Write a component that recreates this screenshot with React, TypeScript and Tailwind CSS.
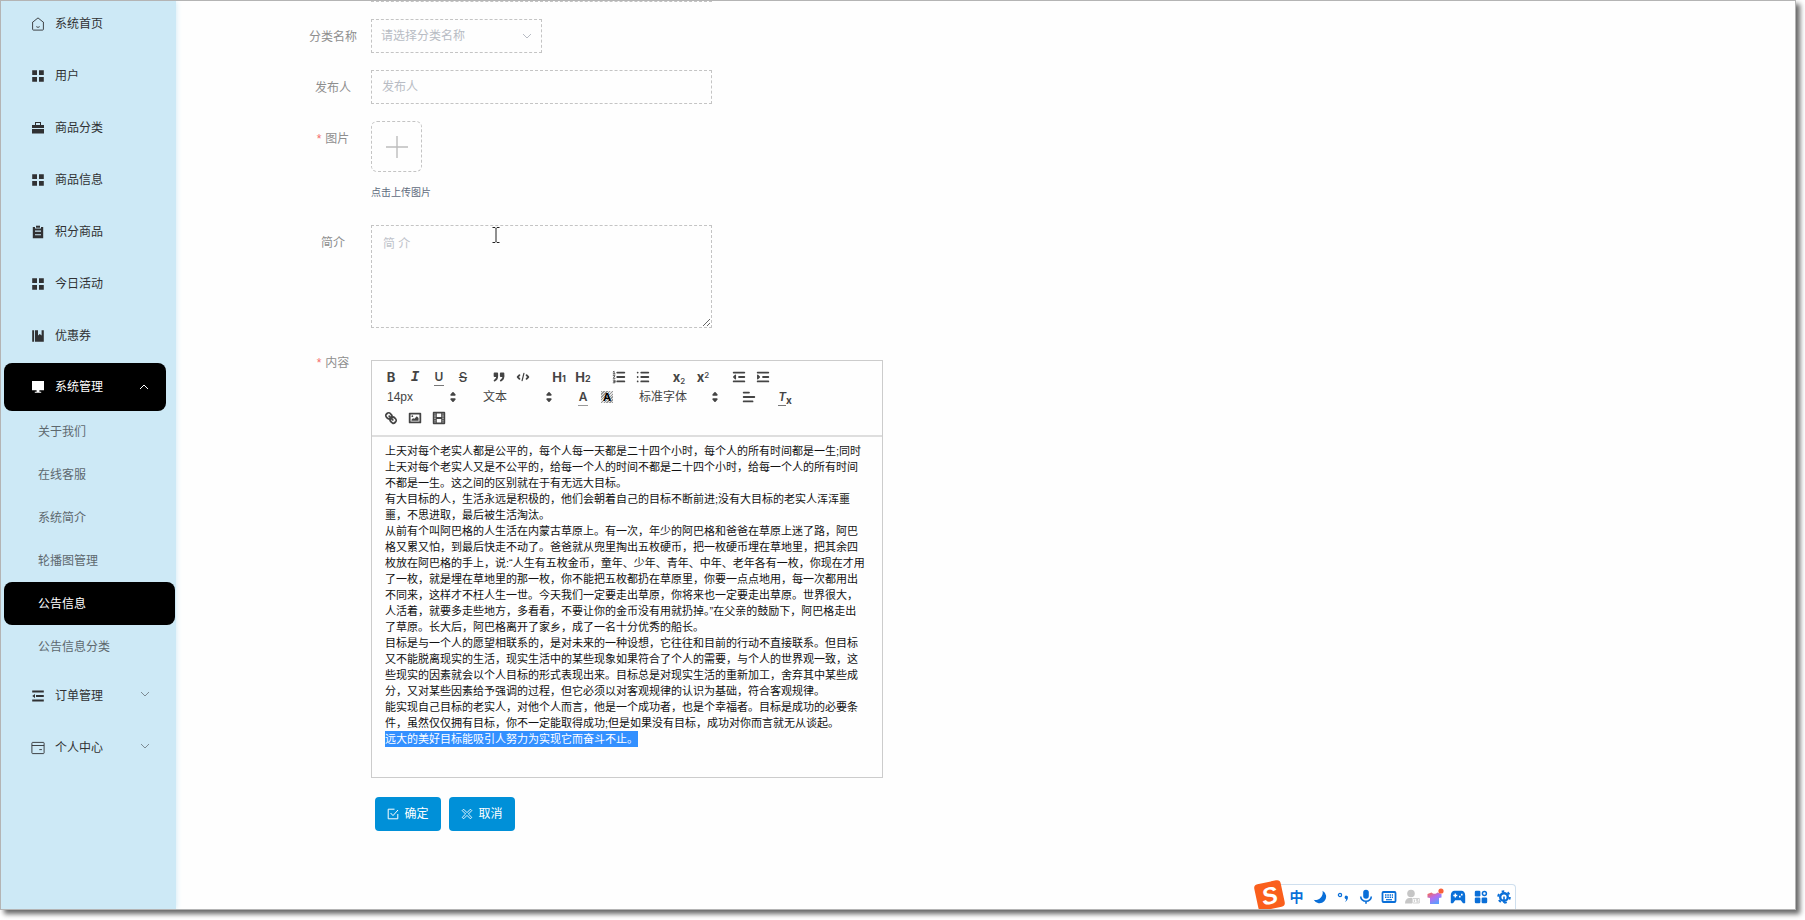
import React from 'react';

const cjk = "font-['Liberation_Sans','Noto_Sans_CJK_SC',sans-serif]";

type IconProps = { className?: string };

/* ---------- sidebar icons ---------- */

const HomeIcon = ({ className }: IconProps) => (
  <svg className={className} viewBox="0 0 14 14" fill="none" stroke="currentColor" strokeWidth="0.9">
    <path d="M1.2 5.6 7 .9l5.8 4.7M1.6 5.3v7c0 .5.3.8.8.8h9.2c.5 0 .8-.3.8-.8v-7M5.3 9.6c.9.9 2.5.9 3.4 0" />
  </svg>
);

const GridIcon = ({ className }: IconProps) => (
  <svg className={className} viewBox="0 0 14 14" fill="currentColor">
    <path d="M1.2 1.2h4.8V6H1.2zM8 1.2h4.8V6H8zM1.2 8h4.8v4.8H1.2zM8 8h4.8v4.8H8z" />
  </svg>
);

const BriefcaseIcon = ({ className }: IconProps) => (
  <svg className={className} viewBox="0 0 14 14" fill="currentColor">
    <path d="M4 1h6v3h3v3H1V4h3zM5 2v2h4V2zM1 8h12v4.6H1z" fillRule="evenodd" />
  </svg>
);

const ClipboardIcon = ({ className }: IconProps) => (
  <svg className={className} viewBox="0 0 14 14" fill="currentColor">
    <path d="M1.8 2H4v1.6h6V2h2.2v11.2H1.8zM4 5.6v1.1h6V5.6zm0 3.6v1.1h6V9.2z" fillRule="evenodd" />
    <path d="M5 .7h4v2H5z" />
  </svg>
);

const NotebookIcon = ({ className }: IconProps) => (
  <svg className={className} viewBox="0 0 14 14" fill="currentColor">
    <path d="M1.2 1.2h1.9v11.6H1.2zM4 1.2h3v5.2l1.8-1.4 1.8 1.4V1.2h2.2v11.6H4z" />
  </svg>
);

const MonitorIcon = ({ className }: IconProps) => (
  <svg className={className} viewBox="0 0 14 14" fill="currentColor">
    <path d="M1 1h12v9.3H1zM5.6 10.3h2.8v1.5h1.8v.9H3.8v-.9h1.8z" />
  </svg>
);

const ListIcon = ({ className }: IconProps) => (
  <svg className={className} viewBox="0 0 14 14" fill="currentColor">
    <path d="M1.2 1.4h11.6v2H1.2zM5 6h7.8v2H5zM1.2 10.6h11.6v2H1.2zM4 5v4L1.2 7z" />
  </svg>
);

const WalletIcon = ({ className }: IconProps) => (
  <svg className={className} viewBox="0 0 14 14" fill="none" stroke="currentColor" strokeWidth="0.9">
    <path d="M1.6 1.4h10.8c.4 0 .7.3.7.7v9.8c0 .4-.3.7-.7.7H1.6c-.4 0-.7-.3-.7-.7V2.1c0-.4.3-.7.7-.7zM.9 4.5h12.2M8.3 8.6h2.6" />
  </svg>
);

const Chevron = ({ className }: IconProps) => (
  <svg className={className} viewBox="0 0 10 10" fill="none" stroke="currentColor" strokeWidth="1">
    <path d="M1 3l4 4 4-4" />
  </svg>
);

const topMenu = [
  { label: '系统首页', Icon: HomeIcon },
  { label: '用户', Icon: GridIcon },
  { label: '商品分类', Icon: BriefcaseIcon },
  { label: '商品信息', Icon: GridIcon },
  { label: '积分商品', Icon: ClipboardIcon },
  { label: '今日活动', Icon: GridIcon },
  { label: '优惠券', Icon: NotebookIcon },
];

const subMenu = ['关于我们', '在线客服', '系统简介', '轮播图管理', '公告信息', '公告信息分类'];

const bottomMenu = [
  { label: '订单管理', Icon: ListIcon },
  { label: '个人中心', Icon: WalletIcon },
];

function Sidebar() {
  return (
    <aside className="w-[175px] shrink-0 bg-[#cde9f6] shadow-[0_0_6px_#cde9f6]">
      <nav className="-mt-[3px] text-xs text-[#303133]">
        <ul>
          {topMenu.map(({ label, Icon }) => (
            <li key={label}>
              <a href="#" className="flex h-[52px] items-center gap-2.5 pl-[30px]">
                <Icon className="size-3.5" />
                {label}
              </a>
            </li>
          ))}
          <li className="pt-px pb-0.5">
            <button
              type="button"
              className="ml-[3px] flex h-12 w-[162px] items-center gap-2.5 rounded-lg bg-black pl-[27px] text-white"
            >
              <MonitorIcon className="size-3.5" />
              系统管理
              <Chevron className="mr-[17px] ml-auto size-2.5 rotate-180" />
            </button>
            <ul className="-mt-px text-[#5d686e]">
              {subMenu.map((label) => (
                <li key={label}>
                  <a
                    href="#"
                    className={
                      label === '公告信息'
                        ? 'mr-px ml-[3px] flex h-[43px] items-center rounded-lg bg-black pl-[34px] text-white'
                        : 'mr-px ml-[3px] flex h-[43px] items-center pl-[34px]'
                    }
                  >
                    {label}
                  </a>
                </li>
              ))}
            </ul>
          </li>
          {bottomMenu.map(({ label, Icon }) => (
            <li key={label}>
              <button type="button" className="flex h-[52px] w-full items-center gap-2.5 pl-[30px]">
                <Icon className="size-3.5" />
                {label}
                <Chevron className="mr-[26px] mb-1 ml-auto size-2.5 text-[#7d8b93]" />
              </button>
            </li>
          ))}
        </ul>
      </nav>
    </aside>
  );
}

/* ---------- editor toolbar ---------- */

function Tool({ title, children }: { title: string; children: React.ReactNode }) {
  return (
    <button type="button" title={title} className="flex h-5 w-6 items-center justify-center leading-none">
      {children}
    </button>
  );
}

function Glyph({ children }: { children: React.ReactNode }) {
  return (
    <svg
      className="size-4"
      viewBox="0 0 18 18"
      fill="none"
      stroke="currentColor"
      strokeWidth="2"
      strokeLinecap="round"
      strokeLinejoin="round"
    >
      {children}
    </svg>
  );
}

function Picker({ label, value, className }: { label: string; value: string; className: string }) {
  return (
    <div className={`relative flex h-5 items-center ${className}`}>
      <select aria-label={label} className="h-5 w-full appearance-none bg-transparent pl-2 text-xs outline-none">
        <option>{value}</option>
      </select>
      <svg className="pointer-events-none absolute right-0.5 size-4" viewBox="0 0 18 18" fill="currentColor" stroke="currentColor" strokeWidth="2" strokeLinejoin="round">
        <path d="M7 11.5h4l-2 2zM7 6.5h4l-2-2z" />
      </svg>
    </div>
  );
}

function Toolbar() {
  return (
    <div className="border-b-2 border-[#dedede] px-[7px] pt-1.5 pb-[7px] text-[#444]">
      <div className="flex gap-3">
        <div className="flex">
          <Tool title="加粗"><span className="font-[Inter] text-[13px] font-bold">B</span></Tool>
          <Tool title="斜体"><span className="font-['Liberation_Mono'] text-sm font-bold italic">I</span></Tool>
          <Tool title="下划线"><span className="border-b border-[#777] px-px font-[Inter] text-xs font-semibold">U</span></Tool>
          <Tool title="删除线"><span className="font-[Inter] text-[13px] font-medium line-through">S</span></Tool>
        </div>
        <div className="flex">
          <Tool title="引用">
            <Glyph>
              <path fill="currentColor" d="M4 5h3v3H4zM11 5h3v3h-3z" />
              <path d="M7 8c0 4.031-3 5-3 5M14 8c0 4.031-3 5-3 5" />
            </Glyph>
          </Tool>
          <Tool title="代码">
            <Glyph>
              <path d="M5 7L3 9l2 2M13 7l2 2-2 2" />
              <path strokeWidth="1.4" d="M10 5L8 13" />
            </Glyph>
          </Tool>
        </div>
        <div className="flex">
          <Tool title="标题 1">
            <span className="font-[Inter] text-[13px] font-bold">H<span className="text-[9px]">1</span></span>
          </Tool>
          <Tool title="标题 2">
            <span className="font-[Inter] text-[13px] font-bold">H<span className="text-[9px]">2</span></span>
          </Tool>
        </div>
        <div className="flex">
          <Tool title="有序列表">
            <Glyph>
              <path d="M7 4h8M7 9h8M7 14h8" />
              <path strokeWidth="1" d="M2.5 3.2l1-.7v3M2.5 5.5h2M2.5 7.5h2l-2 3h2M2.5 12.5h2v3h-2M3 14h1.5" />
            </Glyph>
          </Tool>
          <Tool title="无序列表">
            <Glyph>
              <path d="M7 4h8M7 9h8M7 14h8M3 4h0M3 9h0M3 14h0" />
            </Glyph>
          </Tool>
        </div>
        <div className="flex">
          <Tool title="下标">
            <span className="font-[Inter] text-[13px] font-bold">x<sub className="text-[8px] font-medium">2</sub></span>
          </Tool>
          <Tool title="上标">
            <span className="font-[Inter] text-[13px] font-bold">x<sup className="text-[8px] font-medium">2</sup></span>
          </Tool>
        </div>
        <div className="flex">
          <Tool title="减少缩进">
            <Glyph>
              <path d="M3 4h12M3 14h12M9 9h6" />
              <path fill="currentColor" strokeWidth="1.4" d="M5 7v4L3 9z" />
            </Glyph>
          </Tool>
          <Tool title="增加缩进">
            <Glyph>
              <path d="M3 4h12M3 14h12M9 9h6" />
              <path fill="currentColor" strokeWidth="1.4" d="M3 7v4l2-2z" />
            </Glyph>
          </Tool>
        </div>
      </div>

      <div className="flex gap-3">
        <Picker label="字号" value="14px" className="w-[84px]" />
        <Picker label="标题" value="文本" className="w-[84px]" />
        <div className="flex">
          <Tool title="文字颜色"><span className="border-b border-[#999] px-px font-[Inter] text-xs font-semibold">A</span></Tool>
          <Tool title="背景颜色">
            <span className="flex size-3 items-center justify-center bg-[repeating-linear-gradient(135deg,#999_0_1px,#e4e4e4_1px_2px)] font-[Inter] text-[11px] font-bold text-black">
              A
            </span>
          </Tool>
        </div>
        <Picker label="字体" value="标准字体" className="w-[94px]" />
        <Tool title="对齐">
          <Glyph>
            <path d="M3 4h6M3 9h12M3 14h10" />
          </Glyph>
        </Tool>
        <Tool title="清除格式">
          <span className="border-b border-[#777] font-[Inter] text-xs font-semibold italic">T</span>
          <span className="mt-1.5 font-[Inter] text-[10px] font-bold">x</span>
        </Tool>
      </div>

      <div className="flex pt-px">
        <Tool title="链接">
          <Glyph>
            <path d="M7 7l4 4" />
            <path d="M8.9 4.577a3.476 3.476 0 0 1 .36 4.679A3.476 3.476 0 0 1 4.577 8.9C3.185 7.5 2.035 6.4 4.217 4.217S7.5 3.185 8.9 4.577z" />
            <path d="M13.423 9.1a3.476 3.476 0 0 0-4.679-.36 3.476 3.476 0 0 0 .36 4.679c1.392 1.392 2.5 2.542 4.679.36S14.815 10.5 13.423 9.1z" />
          </Glyph>
        </Tool>
        <Tool title="图片">
          <Glyph>
            <path d="M3 4h12v10H3z" />
            <circle cx="6" cy="7" r="1" fill="currentColor" stroke="none" />
            <path fill="currentColor" stroke="none" d="M5 12v-1l2-2 1 1 3-3 2 2v3z" />
          </Glyph>
        </Tool>
        <Tool title="视频">
          <Glyph>
            <path d="M3 3h12v12H3z" />
            <path fill="currentColor" stroke="none" d="M5 3h1.5v12H5zM11.5 3H13v12h-1.5zM5 8h8v2H5zM3 5h3v1H3zM3 7.5h3v1H3zM3 10h3v1H3zM3 12h3v1H3zM12 5h3v1h-3zM12 7.5h3v1h-3zM12 10h3v1h-3zM12 12h3v1h-3z" />
          </Glyph>
        </Tool>
      </div>
    </div>
  );
}

const paragraphs = [
  `上天对每个老实人都是公平的，每个人每一天都是二十四个小时，每个人的所有时间都是一生;同时
上天对每个老实人又是不公平的，给每一个人的时间不都是二十四个小时，给每一个人的所有时间
不都是一生。这之间的区别就在于有无远大目标。`,
  `有大目标的人，生活永远是积极的，他们会朝着自己的目标不断前进;没有大目标的老实人浑浑噩
噩，不思进取，最后被生活淘汰。`,
  `从前有个叫阿巴格的人生活在内蒙古草原上。有一次，年少的阿巴格和爸爸在草原上迷了路，阿巴
格又累又怕，到最后快走不动了。爸爸就从兜里掏出五枚硬币，把一枚硬币埋在草地里，把其余四
枚放在阿巴格的手上，说:“人生有五枚金币，童年、少年、青年、中年、老年各有一枚，你现在才用
了一枚，就是埋在草地里的那一枚，你不能把五枚都扔在草原里，你要一点点地用，每一次都用出
不同来，这样才不枉人生一世。今天我们一定要走出草原，你将来也一定要走出草原。世界很大，
人活着，就要多走些地方，多看看，不要让你的金币没有用就扔掉。”在父亲的鼓励下，阿巴格走出
了草原。长大后，阿巴格离开了家乡，成了一名十分优秀的船长。`,
  `目标是与一个人的愿望相联系的，是对未来的一种设想，它往往和目前的行动不直接联系。但目标
又不能脱离现实的生活，现实生活中的某些现象如果符合了个人的需要，与个人的世界观一致，这
些现实的因素就会以个人目标的形式表现出来。目标总是对现实生活的重新加工，舍弃其中某些成
分，又对某些因素给予强调的过程，但它必须以对客观规律的认识为基础，符合客观规律。`,
  `能实现自己目标的老实人，对他个人而言，他是一个成功者，也是个幸福者。目标是成功的必要条
件，虽然仅仅拥有目标，你不一定能取得成功;但是如果没有目标，成功对你而言就无从谈起。`,
];

function Editor() {
  return (
    <div className="mt-[15px] flex min-h-[418px] w-[512px] flex-col border border-[#ccc]">
      <Toolbar />
      <div
        role="textbox"
        aria-multiline="true"
        aria-labelledby="content-label"
        contentEditable
        suppressContentEditableWarning
        className="flex-1 px-[13px] py-1.5 text-[11px] leading-4 whitespace-pre text-[#111] outline-none"
      >
        {paragraphs.map((text, i) => (
          <p key={i}>{text}</p>
        ))}
        <p>
          <span className="inline-block bg-[#3390ff] text-white">远大的美好目标能吸引人努力为实现它而奋斗不止。</span>
        </p>
      </div>
    </div>
  );
}

/* ---------- form ---------- */

const labelStyle = 'flex h-[34px] w-[76px] shrink-0 items-center justify-center pt-0.5 text-xs text-[#8e8e8e]';

function NoticeForm() {
  return (
    <form className="-mt-[33px] flex flex-col gap-[17px] pl-[119px]">
      <div className="flex pl-[76px]">
        <input aria-label="标题" className="h-[34px] w-[341px] border border-dashed border-[#c4c4c4]" />
      </div>

      <div className="flex">
        <label htmlFor="category" className={labelStyle}>分类名称</label>
        <div className="relative flex items-center">
          <select
            id="category"
            className="h-[34px] w-[171px] appearance-none border border-dashed border-[#c4c4c4] bg-transparent pl-[9px] text-xs text-[#b8bcc4] outline-none"
          >
            <option>请选择分类名称</option>
          </select>
          <Chevron className="pointer-events-none absolute right-2.5 size-2.5 text-[#b8bcc4]" />
        </div>
      </div>

      <div className="flex">
        <label htmlFor="publisher" className={labelStyle}>发布人</label>
        <input
          id="publisher"
          placeholder="发布人"
          className="h-[34px] w-[341px] border border-dashed border-[#c4c4c4] px-2.5 text-xs outline-none placeholder:text-[#b8bcc4]"
        />
      </div>

      <div className="flex">
        <label htmlFor="picture" className={labelStyle}>
          <span className="mr-1 text-[#f56c6c]">*</span>图片
        </label>
        <div className="pb-[15px]">
          <button
            id="picture"
            type="button"
            className="flex size-[51px] items-center justify-center rounded-md border border-dashed border-[#c4c4c4]"
          >
            <svg className="size-6 text-[#bdbdbd]" viewBox="0 0 24 24" stroke="currentColor" strokeWidth="1.4">
              <path d="M12 1v22M1 12h22" />
            </svg>
          </button>
          <p className="mt-[13px] h-2 text-[10px] leading-4 text-[#606b7d]">点击上传图片</p>
        </div>
      </div>

      <div className="flex">
        <label htmlFor="intro" className={labelStyle}>简介</label>
        <div className="relative">
          <textarea
            id="intro"
            placeholder="简 介"
            className="block h-[103px] w-[341px] resize border border-dashed border-[#c4c4c4] px-[11px] py-2.5 text-xs outline-none placeholder:text-[#bfc3ca]"
          />
          {/* mouse pointer */}
          <svg className="absolute top-0.5 left-[121px] h-4 w-2" viewBox="0 0 8 16" fill="none" stroke="#222">
            <path d="M.5.5H3l1 1 1-1h2.5M4 1.5v13M.5 15.5H3l1-1 1 1h2.5" />
          </svg>
        </div>
      </div>

      <div className="flex">
        <span id="content-label" className={labelStyle}>
          <span className="mr-1 text-[#f56c6c]">*</span>内容
        </span>
        <Editor />
      </div>

      <div className="flex gap-2 pt-0.5 pl-20 text-xs text-white">
        <button type="submit" className="flex h-[34px] w-[66px] items-center justify-center gap-[5px] rounded bg-[#0090d8]">
          <svg className="size-3" viewBox="0 0 12 12" fill="none" stroke="currentColor">
            <path d="M7.5 1.2H1.2v9.6h9.6V6M3.6 5l2.4 2.6L11 2" />
          </svg>
          确定
        </button>
        <button type="button" className="flex h-[34px] w-[66px] items-center justify-center gap-[5px] rounded bg-[#0090d8]">
          <svg className="size-3" viewBox="0 0 12 12" fill="none" stroke="currentColor" strokeWidth="0.9">
            <path d="M1.2 2.6l1.4-1.4L6 4.6l3.4-3.4 1.4 1.4L7.4 6l3.4 3.4-1.4 1.4L6 7.4l-3.4 3.4-1.4-1.4L4.6 6z" />
          </svg>
          取消
        </button>
      </div>
    </form>
  );
}

/* ---------- input method bar ---------- */

function ImeBar() {
  return (
    <div className="absolute right-[279px] bottom-0 flex h-[25px] items-center rounded-tr-sm border border-b-0 border-[#cfdfee] bg-white text-[#0a6fd8]">
      <span className="-mt-1 -ml-3 flex size-[27px] -rotate-12 items-center justify-center rounded-sm bg-[#fa5f1c] text-2xl leading-none font-bold text-white italic">
        S
      </span>
      <div className="ml-0.5 flex">
        <button type="button" className="w-[23px] text-sm leading-5 font-bold">中</button>
        <button type="button" aria-label="夜间" className="flex w-[23px] items-center justify-center">
          <svg className="size-3.5" viewBox="0 0 14 14" fill="currentColor">
            <path d="M9.5.8A6.6 6.6 0 1 1 .7 9.8 7.4 7.4 0 0 0 9.5.8z" />
          </svg>
        </button>
        <button type="button" aria-label="标点" className="flex w-[23px] items-center justify-center">
          <svg className="size-3.5" viewBox="0 0 14 14" fill="currentColor">
            <circle cx="4" cy="5" r="1.6" fill="none" stroke="currentColor" strokeWidth="1.3" />
            <path d="M8.6 7.2a1.7 1.7 0 1 1 3.3.7c-.2 1.7-1.3 3.2-2.9 4 .8-1 1.2-1.9 1.2-2.7-.9-.1-1.6-.9-1.6-2z" />
          </svg>
        </button>
        <button type="button" aria-label="语音" className="flex w-[23px] items-center justify-center">
          <svg className="size-4" viewBox="0 0 16 16" fill="currentColor">
            <rect x="5.2" y=".8" width="5.6" height="9" rx="2.8" />
            <path d="M2.7 7.5a5.3 4.8 0 0 0 10.6 0M8 12.3v2.5" fill="none" stroke="currentColor" strokeWidth="1.6" />
          </svg>
        </button>
        <button type="button" aria-label="键盘" className="flex w-[23px] items-center justify-center">
          <svg className="size-4" viewBox="0 0 16 16" fill="none" stroke="currentColor">
            <rect x="1.5" y="3" width="13" height="10" rx="1" strokeWidth="1.8" />
            <path d="M4 6h8M4 8.3h8" strokeWidth="1.4" strokeDasharray="1.5 .8" />
            <path d="M5 10.7h6" strokeWidth="1.2" />
          </svg>
        </button>
        <button type="button" aria-label="用户" className="flex w-[23px] items-center justify-center text-[#c6c6c6]">
          <svg className="size-4" viewBox="0 0 16 16" fill="currentColor">
            <circle cx="7" cy="4.5" r="3.8" />
            <path d="M1 14.5c0-3.5 1.5-5 4-5.5h3v5.5z" />
            <path d="M8.7 9.5h6.6v4.5H8.7zM10.5 10.5v2.5M14 10.5h-1.7v1.2H14V13h-1.7" fill="none" stroke="currentColor" strokeWidth=".8" />
          </svg>
        </button>
        <button type="button" aria-label="皮肤" className="flex w-[23px] items-center justify-center">
          <svg className="size-[18px]" viewBox="0 0 18 18">
            <defs>
              <linearGradient id="skin" x1="0" y1="0" x2="0.6" y2="1">
                <stop offset="0" stopColor="#ff6b3d" />
                <stop offset=".5" stopColor="#b66df0" />
                <stop offset="1" stopColor="#5aa0ff" />
              </linearGradient>
            </defs>
            <path d="M5.5 4.5L1.5 6v3.5l2.5.5v6h9v-6l2.5-.5V6l-4-1.5c-1.5 1.8-4.5 1.8-6 0z" fill="url(#skin)" />
            <circle cx="15" cy="3" r="2.6" fill="#f9603a" />
          </svg>
        </button>
        <button type="button" aria-label="游戏" className="flex w-[23px] items-center justify-center">
          <svg className="size-4" viewBox="0 0 16 16" fill="currentColor">
            <path
              fillRule="evenodd"
              d="M4.5 1.8h7c2 0 3.7 1.8 3.7 4.6v7.3c0 .6-1.7.8-2.4.3l-2-2.7H5.2l-2 2.7c-.7.5-2.4.3-2.4-.3V6.4c0-2.8 1.7-4.6 3.7-4.6zM4.6 4.5v1.3H3.3v1.4h1.3v1.3H6V7.2h1.3V5.8H6V4.5zM9 6.8v1.6h1.6V6.8zM11 4.8v1.6h1.6V4.8z"
            />
          </svg>
        </button>
        <button type="button" aria-label="工具" className="flex w-[23px] items-center justify-center">
          <svg className="size-3.5" viewBox="0 0 14 14" fill="currentColor">
            <rect x=".8" y=".8" width="5.6" height="5.6" rx="1.2" />
            <rect x=".8" y="7.6" width="5.6" height="5.6" rx="1.2" />
            <rect x="7.6" y="7.6" width="5.6" height="5.6" rx="1.2" />
            <circle cx="10.4" cy="3.6" r="2" fill="none" stroke="currentColor" strokeWidth="1.5" />
          </svg>
        </button>
        <button type="button" aria-label="设置" className="flex w-[23px] items-center justify-center">
          <svg className="size-3.5" viewBox="0 0 14 14" fill="none" stroke="currentColor">
            <circle cx="7" cy="7" r="3.8" strokeWidth="2.4" />
            <circle cx="7" cy="7" r="5.8" strokeWidth="2" strokeDasharray="2.6 3.47" />
            <path d="M7 6.5V13" strokeWidth="1.6" />
          </svg>
        </button>
      </div>
    </div>
  );
}

export default function App() {
  return (
    <div className={`h-screen overflow-hidden bg-white pr-[9px] pb-2.5 ${cjk}`} lang="zh-CN">
      <div className="h-full border border-[#b4b4b4] shadow-[4px_4px_5px_rgba(0,0,0,0.6)]">
        <div className="relative flex h-full overflow-hidden bg-[#fefefe]">
          <Sidebar />
          <main className="min-w-0 flex-1">
            <NoticeForm />
          </main>
          <ImeBar />
        </div>
      </div>
    </div>
  );
}
